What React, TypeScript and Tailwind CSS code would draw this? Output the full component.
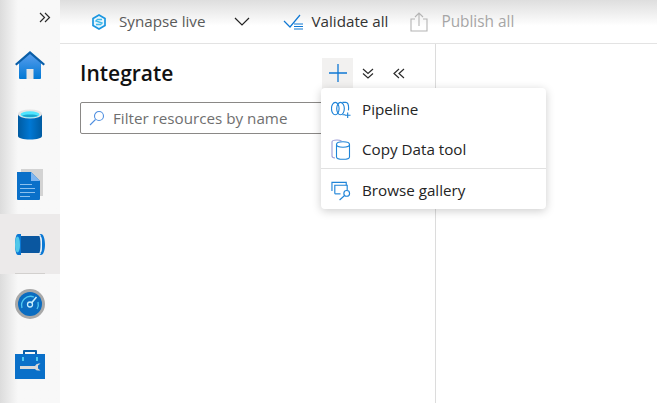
const font = { fontFamily: '"Open Sans", "Noto Sans", sans-serif' };

function DoubleRight() {
  return (
    <svg width="12" height="11" viewBox="0 0 12 11" fill="none" stroke="#2b2b2b" strokeWidth="1.2">
      <path d="M1 1l4.500 4.500L1 10M6 1l4.500 4.500L6 10" />
    </svg>
  );
}

function HomeIcon() {
  return (
    <svg width="32" height="31" viewBox="0 0 32 31">
      <defs>
        <linearGradient id="home" x1="0" y1="0" x2="0" y2="1">
          <stop offset="0" stopColor="#5ea0ef" />
          <stop offset="1" stopColor="#0078d4" />
        </linearGradient>
      </defs>
      <path d="M5 13L16 3l11 10v16a1 1 0 0 1-1 1H6a1 1 0 0 1-1-1z" fill="url(#home)" />
      <path d="M1 15L16 2l15 13-1.500 1.500L16 5 2.500 16.500z" fill="#0a5ea8" />
      <rect x="12.500" y="20" width="7" height="10" fill="#e6e6e6" />
    </svg>
  );
}

function DbIcon() {
  return (
    <svg width="24" height="31" viewBox="0 0 24 31">
      <defs>
        <linearGradient id="db" x1="0" y1="0" x2="1" y2="0">
          <stop offset="0" stopColor="#005ba1" />
          <stop offset="0.5" stopColor="#0078d4" />
          <stop offset="1" stopColor="#005ba1" />
        </linearGradient>
      </defs>
      <path d="M0 5v22c0 2 5 3.500 12 3.500S24 29 24 27V5z" fill="url(#db)" />
      <ellipse cx="12" cy="5" rx="12" ry="4.500" fill="#e4e4e4" />
      <ellipse cx="12" cy="5.500" rx="9.500" ry="3.300" fill="#50e6ff" />
      <path d="M4 6.500c2-1.500 14-1.500 16 0-2 2-14 2-16 0z" fill="#1ea7cf" />
    </svg>
  );
}

function DocIcon() {
  return (
    <svg width="27" height="31" viewBox="0 0 27 31">
      <rect x="4" y="0" width="22" height="27" fill="#d3d3d3" />
      <path d="M0 3h14l9 9v18a1 1 0 0 1-1 1H1a1 1 0 0 1-1-1z" fill="#0a70c9" />
      <path d="M14 3l9 9h-9z" fill="#7fb6f0" />
      <path d="M3 15h12v1H3zM3 19h15v1H3zM3 23h15v1H3zM3 27h10v1H3z" fill="#8cc0ee" />
    </svg>
  );
}

function PipeIcon() {
  return (
    <svg width="30" height="21" viewBox="0 0 30 21">
      <rect x="4" y="2" width="22" height="17" fill="#0a57a0" />
      <path d="M3 0h3v21H3C1 21 0 16 0 10.500S1 0 3 0z" fill="#0a78d4" />
      <ellipse cx="2.500" cy="10.500" rx="2.500" ry="8" fill="#50c8ea" />
      <path d="M24 0h2c2.500 0 4 5 4 10.500S28.500 21 26 21h-2c2 0 3-5 3-10.500S26 0 24 0z" fill="#0a78d4" />
      <path d="M24 1c2 0 3 4 3 9.500S26 20 24 20c1-2 1.500-5 1.500-9.500S25 3 24 1z" fill="#e8f3fb" />
    </svg>
  );
}

function GaugeIcon() {
  return (
    <svg width="30" height="30" viewBox="0 0 30 30">
      <circle cx="15" cy="15" r="15" fill="#a8a8a8" />
      <circle cx="15" cy="15" r="12" fill="#0a6cc0" />
      <path d="M7 19a9 9 0 0 1 12-11" fill="none" stroke="#50c8f0" strokeWidth="1.300" />
      <path d="M23 13a9 9 0 0 1-1 7" fill="none" stroke="#50c8f0" strokeWidth="1.300" />
      <circle cx="15" cy="15.500" r="2.500" fill="none" stroke="#c8eefc" strokeWidth="1.300" />
      <path d="M16.500 14l5-6" stroke="#c8eefc" strokeWidth="1.600" />
    </svg>
  );
}

function ToolboxIcon() {
  return (
    <svg width="30" height="30" viewBox="0 0 30 30">
      <path d="M8 5V2a1 1 0 0 1 1-1h12a1 1 0 0 1 1 1v3h-2V3H10v2z" fill="#0a5ea8" />
      <rect x="0" y="5" width="30" height="25" fill="#0a70c9" />
      <rect x="7" y="8" width="2" height="4" fill="#50c8f0" />
      <rect x="21" y="8" width="2" height="4" fill="#50c8f0" />
      <path d="M5 17h15a4 4 0 0 1 4-2.500h1.500L23 16.500v3l2.500 2H24A4 4 0 0 1 20 20H5z" fill="#d9d9d9" />
    </svg>
  );
}

function SidebarItem({ active, children }: { active?: boolean; children: React.ReactNode }) {
  return (
    <div className={active ? "relative flex h-[60px] items-center justify-center bg-[#eceaea]" : "flex h-[60px] items-center justify-center"}>
      {children}
      {active && <span className="absolute bottom-0 left-[15px] h-px w-[30px] bg-[#d2d0ce]" />}
    </div>
  );
}

function MenuRow({ icon, label }: { icon: React.ReactNode; label: string }) {
  return (
    <div className="flex h-10 items-center gap-[11px] pt-[3px] pl-[10px] text-[15.200px] text-[#242424]">
      <span className="flex w-[20px] justify-center">{icon}</span>
      {label}
    </div>
  );
}

export default function App() {
  return (
    <div className="flex h-[403px] w-[657px] overflow-hidden bg-white" style={font}>
      <aside className="flex w-[60px] shrink-0 flex-col bg-gradient-to-r from-[#dcdcdc] via-[#f8f8f8] via-30% to-[#f8f8f8]">
        <div className="flex h-[34px] items-center justify-end pr-[9px]">
          <DoubleRight />
        </div>
        <div className="flex flex-col">
          <SidebarItem><HomeIcon /></SidebarItem>
          <SidebarItem><DbIcon /></SidebarItem>
          <SidebarItem><DocIcon /></SidebarItem>
          <SidebarItem active><PipeIcon /></SidebarItem>
          <SidebarItem><GaugeIcon /></SidebarItem>
          <SidebarItem><ToolboxIcon /></SidebarItem>
        </div>
      </aside>

      <div className="flex min-w-0 flex-1 flex-col">
        <header className="flex h-[44px] shrink-0 items-center border-b border-[#e3e3e3] bg-gradient-to-b from-[#dedede] to-white to-60% pl-[31px]">
          <svg width="16" height="16" viewBox="0 0 16 16" fill="none">
            <path d="M8 1l6 3.500v7L8 15l-6-3.500v-7z" stroke="#1a96e0" strokeWidth="1.700" fill="#e8f6fd" />
            <path d="M11 5.500H6.500L5 7l6 2-1.500 1.500H5" stroke="#3fb8e8" strokeWidth="1.400" />
          </svg>
          <span className="ml-[12px] text-[15.200px] text-[#5a5a5a]">Synapse live</span>
          <svg className="ml-[29px]" width="16" height="9" viewBox="0 0 16 9" fill="none" stroke="#222" strokeWidth="1.200">
            <path d="M1 1l7 7 7-7" />
          </svg>
          <svg className="ml-[33px]" width="21" height="16" viewBox="0 0 21 16" fill="none">
            <path d="M1 7l6 6L17 1" stroke="#0f78d4" strokeWidth="1.200" />
            <path d="M11 10h9M11 12.500h9M11 15h9" stroke="#0f78d4" strokeWidth="1.200" />
          </svg>
          <span className="ml-[7px] text-[15.200px] text-[#333]">Validate all</span>
          <svg className="ml-[22px]" width="18" height="20" viewBox="0 0 18 20" fill="none" stroke="#b4b4b4" strokeWidth="1.100">
            <path d="M5 7H1v12h16V7h-4M9 14V1M5 5l4-4 4 4" />
          </svg>
          <span className="ml-[13px] text-[15.400px] text-[#a6a6a6]">Publish all</span>
        </header>

        <div className="relative flex min-h-0 flex-1">
          <section className="w-[376px] shrink-0 border-r border-[#dcdcdc] pr-5 pl-5">
            <div className="flex h-[57px] items-center justify-between pt-px">
              <h1 className="text-[21px] leading-none font-semibold text-[#111]">Integrate</h1>
              <div className="mr-[10px] flex items-center">
                <span className="flex h-[31px] w-[31px] items-center justify-center bg-[#f2f1f0]">
                  <svg width="20" height="20" viewBox="0 0 20 20" stroke="#0f78d4" strokeWidth="1.300">
                    <path d="M10 1v18M1 10h18" />
                  </svg>
                </span>
                <svg className="ml-[9px]" width="12" height="11" viewBox="0 0 12 11" fill="none" stroke="#2b2b2b" strokeWidth="1.200">
                  <path d="M1 1l5 4.500L11 1M1 5.500L6 10l5-4.500" />
                </svg>
                <svg className="ml-[19px]" width="12" height="11" viewBox="0 0 12 11" fill="none" stroke="#2b2b2b" strokeWidth="1.200">
                  <path d="M6 1L1 5.500 6 10M11 1L6 5.500l5 4.500" />
                </svg>
              </div>
            </div>
            <div className="mt-px flex h-8 items-center rounded-[2px] border border-[#8a8886] pl-[8px]">
              <svg width="16" height="16" viewBox="0 0 16 16" fill="none" stroke="#4f8fe0" strokeWidth="1.100">
                <circle cx="10" cy="6" r="4.500" />
                <path d="M6.500 9.500L1 15" />
              </svg>
              <span className="ml-[8px] text-[15.200px] text-[#6f6f6f]">Filter resources by name</span>
            </div>
          </section>

          <div className="absolute top-[44px] left-[261px] w-[225px] rounded-[4px] bg-white shadow-[0_2px_10px_rgba(0,0,0,0.2)]">
            <MenuRow
              label="Pipeline"
              icon={
                <svg width="21" height="18" viewBox="0 0 21 18" fill="none" stroke="#1f84d8" strokeWidth="1.200">
                  <ellipse cx="4.500" cy="7.500" rx="4" ry="6.500" />
                  <ellipse cx="10" cy="7.500" rx="4" ry="6.500" />
                  <path d="M12 1h3.500c1.800 0 3 2.600 3 6 0 1-.1 1.700-.3 2.500M15 14h-3" />
                  <path d="M17.500 11.500v6M14.500 14.500h6" />
                </svg>
              }
            />
            <MenuRow
              label="Copy Data tool"
              icon={
                <svg width="20" height="21" viewBox="0 0 20 21" fill="none" strokeWidth="1.100">
                  <path d="M4 19c-2-.3-3-1-3-2V3c0-1 2-2 5-2 2 0 3.500.4 4.500 1" stroke="#9c9cd8" />
                  <ellipse cx="12" cy="5.500" rx="6.500" ry="2.700" stroke="#1f84d8" />
                  <path d="M5.500 5.500V18c0 1.200 3 2.300 6.500 2.300s6.500-1.100 6.500-2.300V5.500" stroke="#1f84d8" />
                </svg>
              }
            />
            <div className="h-px bg-[#e1e1e1]" />
            <MenuRow
              label="Browse gallery"
              icon={
                <svg width="21" height="20" viewBox="0 0 21 20" fill="none" stroke="#1f84d8" strokeWidth="1.200">
                  <path d="M1 10V1h15v3" />
                  <path d="M4 13V4h13v5" />
                  <path d="M4 13h6" />
                  <circle cx="16.500" cy="12.500" r="3" />
                  <path d="M14 15l-5 4.500" />
                </svg>
              }
            />
          </div>
        </div>
      </div>
    </div>
  );
}
